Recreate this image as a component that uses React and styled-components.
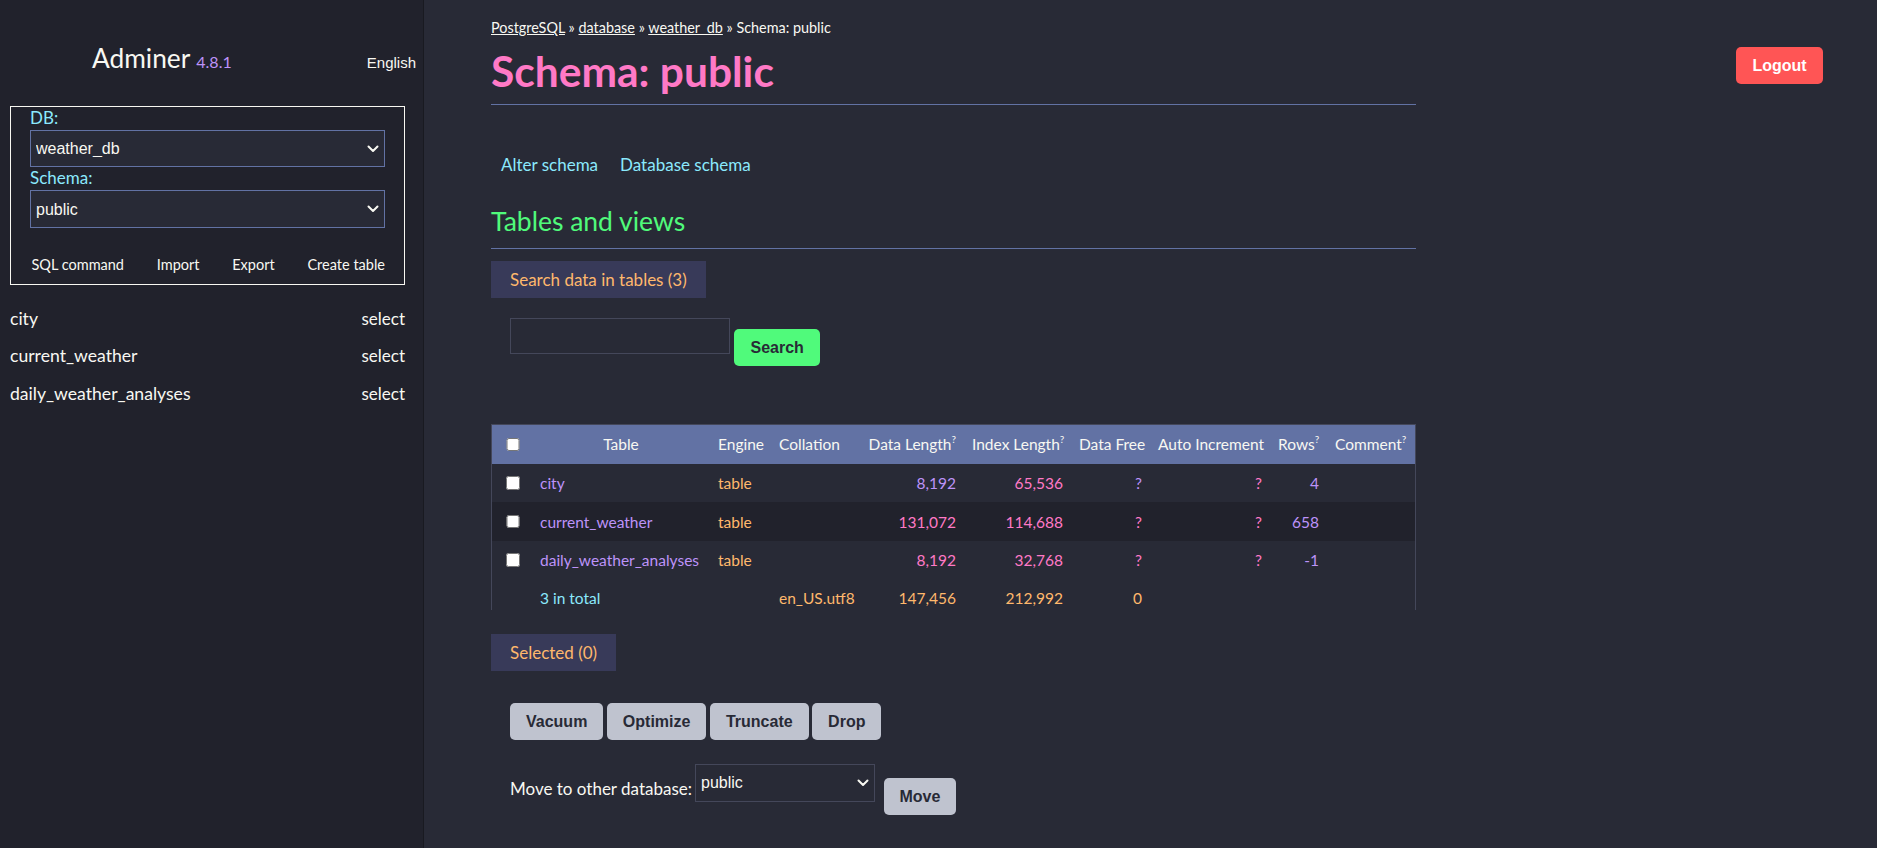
import React from "react";
import styled, { createGlobalStyle } from "styled-components";

const C = {
  bg: "#282a36",
  side: "#21222c",
  edge: "#191a21",
  line: "#44475a",
  comment: "#6272a4",
  fg: "#f8f8f2",
  cyan: "#8be9fd",
  green: "#50fa7b",
  orange: "#ffb86c",
  pink: "#ff79c6",
  purple: "#bd93f9",
  red: "#ff5555",
  band: "#383a59",
  btn: "#bfc3cf",
  ink: "#282a36",
};

const SANS = `Lato, "Noto Sans", sans-serif`;
const ARIAL = `"Liberation Sans", Arial, sans-serif`;

const GlobalStyle = createGlobalStyle`
  html, body { margin: 0; padding: 0; background: ${C.bg}; }
  body { font-family: ${SANS}; color: ${C.fg}; }
  * { box-sizing: border-box; }
`;

const Page = styled.div`
  display: flex;
  height: 848px;
  overflow: hidden;
`;

/* ---------- Sidebar ---------- */
const Sidebar = styled.aside`
  flex: none;
  width: 424px;
  background: ${C.side};
  border-right: 1px solid ${C.edge};
  padding: 0 18px 0 10px;
`;

const Brand = styled.div`
  display: flex;
  align-items: baseline;
  padding: 41.5px 0 0 82px;
  margin-right: -11px;
`;

const BrandName = styled.span`
  font-size: 26.3px;
  line-height: 32px;
  color: ${C.fg};
`;

const Version = styled.span`
  font-size: 16px;
  margin-left: 6px;
  color: ${C.purple};
`;

const Lang = styled.span`
  margin-left: auto;
  font: 15px ${ARIAL};
  color: ${C.fg};
`;

const DbForm = styled.form`
  margin-top: 32.5px;
  border: 1px solid ${C.fg};
  padding: 0 19px 9.5px;
`;

const FieldLabel = styled.label`
  display: block;
  font-size: 17px;
  line-height: 21px;
  color: ${C.cyan};
  margin-bottom: 2px;
`;

const SelectWrap = styled.div`
  position: relative;
  width: ${(p) => p.$w || "100%"};
  flex: none;
`;

const NativeSelect = styled.select`
  appearance: none;
  width: 100%;
  height: 37.4px;
  padding: 0 26px 0 5px;
  font: 16px ${ARIAL};
  color: ${C.fg};
  background: ${C.bg};
  border: 1px solid ${(p) => p.$border || C.comment};
  border-radius: 0;
  outline: none;
`;

const Chevron = styled.svg`
  position: absolute;
  right: 6px;
  top: 50%;
  margin-top: -4px;
  pointer-events: none;
`;

const ToolLinks = styled.div`
  display: flex;
  justify-content: space-between;
  margin-top: 27px;
  padding: 0 0 0 1.5px;
  font-size: 14.5px;
  line-height: 20px;
`;

const PlainLink = styled.a`
  color: ${(p) => p.$color || C.fg};
  text-decoration: none;
`;

const TableList = styled.ul`
  list-style: none;
  margin: 14.5px 0 0;
  padding: 0;
`;

const TableItem = styled.li`
  display: flex;
  justify-content: space-between;
  align-items: center;
  height: 37.3px;
  font-size: 17.6px;
`;

const SelectLink = styled(PlainLink)`
  font-size: 17px;
`;

/* ---------- Main ---------- */
const Main = styled.main`
  position: relative;
  flex: 1;
  padding: 18px 0 0 67px;
`;

const Content = styled.div`
  width: 925px;
`;

const Crumbs = styled.p`
  margin: 0;
  font-size: 14.4px;
  line-height: 20px;
  color: ${C.fg};
`;

const CrumbLink = styled.a`
  color: ${C.fg};
  text-decoration: underline;
`;

const Title = styled.h2`
  margin: 7.75px 0 0;
  font-weight: 700;
  font-size: 42.5px;
  line-height: 50px;
  color: ${C.pink};
`;

const Rule = styled.hr`
  margin: ${(p) => p.$top || 0}px 0 0;
  border: 0;
  border-top: 1px solid ${C.comment};
  height: 0;
`;

const LinkBar = styled.nav`
  display: flex;
  gap: 22px;
  margin-top: 50.5px;
  padding-left: 10px;
  font-size: 17px;
  line-height: 20px;
`;

const SectionTitle = styled.h3`
  margin: 30px 0 0;
  font-weight: 400;
  font-size: 26.5px;
  line-height: 32px;
  color: ${C.green};
`;

const Band = styled.div`
  display: inline-block;
  margin-top: ${(p) => p.$top}px;
  height: 37px;
  padding: 0 19px;
  line-height: 37px;
  font-size: 17px;
  background: ${C.band};
  color: ${C.orange};
`;

const Row = styled.div`
  display: flex;
  align-items: flex-start;
  margin-top: ${(p) => p.$top}px;
  padding-left: 19px;
  gap: ${(p) => p.$gap || 0}px;
`;

const SearchInput = styled.input`
  width: 220px;
  height: 36px;
  background: transparent;
  border: 1px solid ${C.line};
  color: ${C.fg};
  outline: none;
`;

const VARIANTS = {
  gray: { bg: C.btn, fg: C.ink },
  green: { bg: C.green, fg: C.ink },
  red: { bg: C.red, fg: "#ffffff" },
};

const Btn = styled.button`
  height: 37px;
  padding: 0 ${(p) => p.$px || 16}px;
  margin-top: ${(p) => p.$mt || 0}px;
  margin-left: ${(p) => p.$ml || 0}px;
  border: 0;
  border-radius: 5px;
  font: 700 16px/1 ${ARIAL};
  background: ${(p) => VARIANTS[p.$variant].bg};
  color: ${(p) => VARIANTS[p.$variant].fg};
  cursor: pointer;
`;

const Logout = styled(Btn)`
  position: absolute;
  top: 47px;
  right: 54px;
  width: 87px;
  padding: 0;
`;

const MoveLabel = styled.span`
  align-self: center;
  font-size: 17px;
  line-height: 20px;
  margin-right: 3px;
  margin-top: -2px;
  white-space: nowrap;
`;

/* ---------- Table ---------- */
const TableFrame = styled.div`
  margin-top: 57.75px;
  border: 1px solid ${C.line};
  border-bottom: 0;
  width: 925px;
`;

const Grid = styled.table`
  width: 923px;
  table-layout: fixed;
  border-collapse: collapse;
  font-size: 15.5px;
  line-height: 20px;
`;

const HeadRow = styled.tr`
  height: 39px;
  background: ${C.comment};
`;

const BodyRow = styled.tr`
  height: 38.5px;
  background: ${(p) => (p.$shade ? C.side : C.bg)};
`;

const FootRow = styled.tr`
  height: 31px;
`;

const TONES = {
  purple: C.purple,
  pink: C.pink,
  orange: C.orange,
  cyan: C.cyan,
  fg: C.fg,
};

const HeadCell = styled.th`
  padding: 0 8px;
  font-weight: 400;
  white-space: nowrap;
  text-align: ${(p) => p.$align || "left"};
  color: ${C.fg};
`;

const Cell = styled.td`
  padding: ${(p) => (p.$foot ? "9px 8px 0" : "0 8px")};
  vertical-align: ${(p) => (p.$foot ? "top" : "middle")};
  white-space: nowrap;
  text-align: ${(p) => p.$align || "left"};
  color: ${(p) => TONES[p.$tone || "fg"]};
`;

const CheckCell = styled.td`
  padding: 0 0 0 14px;
  line-height: 0;
`;

const CheckHead = styled.th`
  padding: 0 0 0 14px;
  line-height: 0;
  text-align: left;
`;

const Box = styled.input`
  width: 13.5px;
  height: 13.5px;
  margin: 0;
`;

const Sup = styled.sup`
  font-size: 10px;
  line-height: 0;
  vertical-align: 7px;
`;

const ChevronIcon = () => (
  <Chevron width="12" height="8" viewBox="0 0 12 8">
    <path d="M1.5 1.5 L6 6 L10.5 1.5" fill="none" stroke={C.fg} strokeWidth="2" strokeLinecap="round" strokeLinejoin="round" />
  </Chevron>
);

const Select = ({ value, w, border }) => (
  <SelectWrap $w={w}>
    <NativeSelect defaultValue={value} $border={border}>
      <option value={value}>{value}</option>
    </NativeSelect>
    <ChevronIcon />
  </SelectWrap>
);

const COLS = [40, 178, 61, 77, 116, 107, 79, 120, 57, 88];

const rows = [
  { name: "city", dl: ["8,192", "purple"], il: ["65,536", "pink"], df: "purple", ai: "pink", rows: "4" },
  { name: "current_weather", dl: ["131,072", "pink"], il: ["114,688", "pink"], df: "pink", ai: "pink", rows: "658" },
  { name: "daily_weather_analyses", dl: ["8,192", "pink"], il: ["32,768", "pink"], df: "pink", ai: "pink", rows: "-1" },
];

export default function App() {
  return (
    <>
      <GlobalStyle />
      <Page>
        <Sidebar>
          <Brand>
            <BrandName>Adminer</BrandName>
            <Version>4.8.1</Version>
            <Lang>English</Lang>
          </Brand>
          <DbForm onSubmit={(e) => e.preventDefault()}>
            <FieldLabel>DB:</FieldLabel>
            <Select value="weather_db" />
            <FieldLabel>Schema:</FieldLabel>
            <Select value="public" />
            <ToolLinks>
              <PlainLink href="#">SQL command</PlainLink>
              <PlainLink href="#">Import</PlainLink>
              <PlainLink href="#">Export</PlainLink>
              <PlainLink href="#">Create table</PlainLink>
            </ToolLinks>
          </DbForm>
          <TableList>
            {rows.map((r) => (
              <TableItem key={r.name}>
                <PlainLink href="#">{r.name}</PlainLink>
                <SelectLink href="#">select</SelectLink>
              </TableItem>
            ))}
          </TableList>
        </Sidebar>

        <Main>
          <Logout $variant="red">Logout</Logout>
          <Content>
            <Crumbs>
              <CrumbLink href="#">PostgreSQL</CrumbLink> » <CrumbLink href="#">database</CrumbLink> »{" "}
              <CrumbLink href="#">weather_db</CrumbLink> » Schema: public
            </Crumbs>
            <Title>Schema: public</Title>
            <Rule $top={8} />
            <LinkBar>
              <PlainLink href="#" $color={C.cyan}>Alter schema</PlainLink>
              <PlainLink href="#" $color={C.cyan}>Database schema</PlainLink>
            </LinkBar>
            <SectionTitle>Tables and views</SectionTitle>
            <Rule $top={10.3} />
            <Band $top={12.5}>Search data in tables (3)</Band>
            <Row $top={20}>
              <SearchInput type="search" />
              <Btn $variant="green" $mt={11} $ml={4} $px={16.5}>Search</Btn>
            </Row>

            <TableFrame>
              <Grid>
                <colgroup>
                  {COLS.map((w, i) => (
                    <col key={i} style={{ width: w }} />
                  ))}
                </colgroup>
                <thead>
                  <HeadRow>
                    <CheckHead><Box type="checkbox" /></CheckHead>
                    <HeadCell $align="center">Table</HeadCell>
                    <HeadCell>Engine</HeadCell>
                    <HeadCell>Collation</HeadCell>
                    <HeadCell $align="right">Data Length<Sup>?</Sup></HeadCell>
                    <HeadCell $align="right">Index Length<Sup>?</Sup></HeadCell>
                    <HeadCell $align="right">Data Free</HeadCell>
                    <HeadCell $align="right">Auto Increment</HeadCell>
                    <HeadCell $align="right">Rows<Sup>?</Sup></HeadCell>
                    <HeadCell>Comment<Sup>?</Sup></HeadCell>
                  </HeadRow>
                </thead>
                <tbody>
                  {rows.map((r, i) => (
                    <BodyRow key={r.name} $shade={i === 1}>
                      <CheckCell><Box type="checkbox" /></CheckCell>
                      <Cell $tone="purple">{r.name}</Cell>
                      <Cell $tone="orange">table</Cell>
                      <Cell />
                      <Cell $align="right" $tone={r.dl[1]}>{r.dl[0]}</Cell>
                      <Cell $align="right" $tone={r.il[1]}>{r.il[0]}</Cell>
                      <Cell $align="right" $tone={r.df}>?</Cell>
                      <Cell $align="right" $tone={r.ai}>?</Cell>
                      <Cell $align="right" $tone="purple">{r.rows}</Cell>
                      <Cell />
                    </BodyRow>
                  ))}
                  <FootRow>
                    <Cell $foot />
                    <Cell $foot $tone="cyan">3 in total</Cell>
                    <Cell $foot />
                    <Cell $foot $tone="orange">en_US.utf8</Cell>
                    <Cell $foot $align="right" $tone="orange">147,456</Cell>
                    <Cell $foot $align="right" $tone="orange">212,992</Cell>
                    <Cell $foot $align="right" $tone="orange">0</Cell>
                    <Cell $foot />
                    <Cell $foot />
                    <Cell $foot />
                  </FootRow>
                </tbody>
              </Grid>
            </TableFrame>

            <Band $top={23.5}>Selected (0)</Band>
            <Row $top={32.5} $gap={3.5}>
              <Btn $variant="gray">Vacuum</Btn>
              <Btn $variant="gray">Optimize</Btn>
              <Btn $variant="gray">Truncate</Btn>
              <Btn $variant="gray">Drop</Btn>
            </Row>
            <Row $top={24}>
              <MoveLabel>Move to other database:</MoveLabel>
              <Select value="public" w="180px" border={C.line} />
              <Btn $variant="gray" $mt={14} $ml={9} $px={15.5}>Move</Btn>
            </Row>
          </Content>
        </Main>
      </Page>
    </>
  );
}
